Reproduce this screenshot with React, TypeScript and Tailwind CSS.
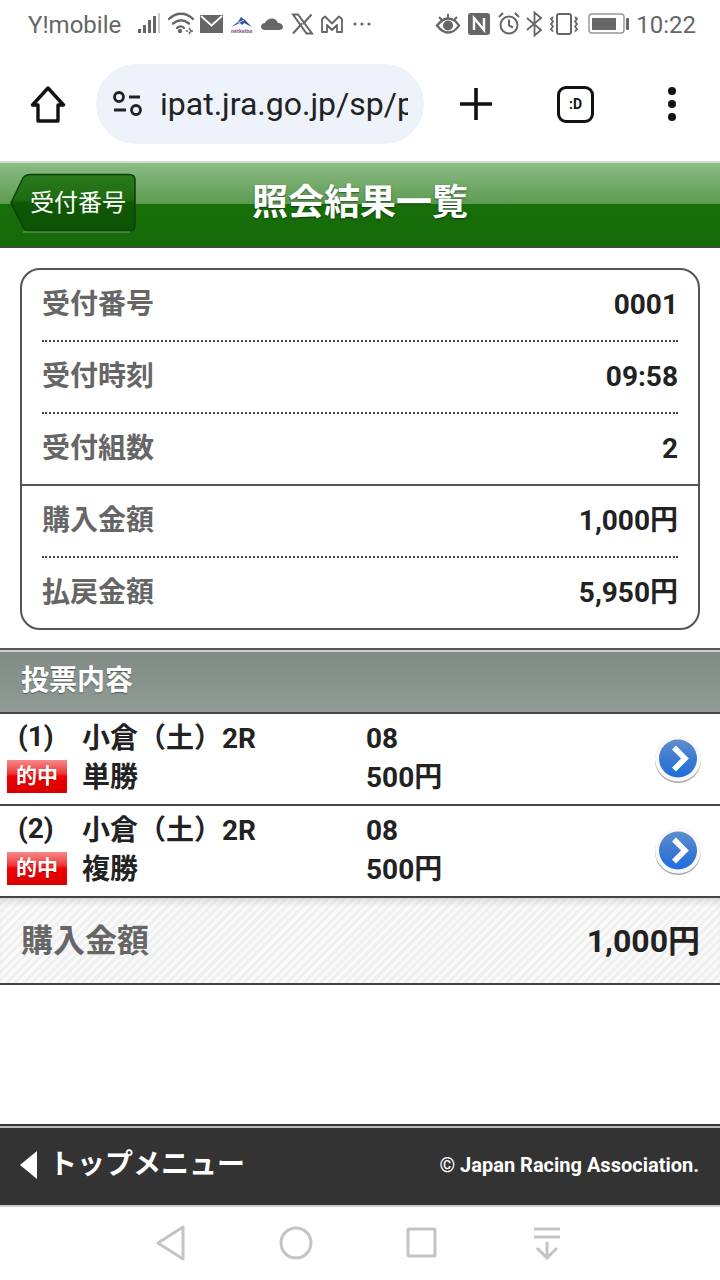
const jp = "font-['Roboto','Noto_Sans_CJK_JP',sans-serif]";

const StatusIcons = () => (
  <svg width="240" height="30" viewBox="0 0 240 30">
    {/* signal */}
    <g fill="#666">
      <rect x="0" y="19" width="3" height="4" />
      <rect x="5" y="15" width="3" height="8" />
      <rect x="10" y="10" width="3" height="13" />
      <rect x="15" y="6" width="3" height="17" />
      <rect x="20" y="3" width="2" height="20" fill="#ccc" />
    </g>
    {/* wifi */}
    <g fill="none" stroke="#666" strokeWidth="2.4" strokeLinecap="round">
      <path d="M31 9c7-7 17-7 24 0" />
      <path d="M35 13.500c5-4 11-4 16 0" />
      <path d="M39 18c2-2 5-2 7 0" />
    </g>
    <circle cx="42" cy="21" r="2.200" fill="#666" />
    <path d="M48 21h2m3 0h2M51 18l2 3-2 3" stroke="#666" strokeWidth="1.4" fill="none" />
    {/* mail */}
    <rect x="62" y="5" width="23" height="18" fill="#666" />
    <path d="M63 6l10.500 9.500L84 6" fill="none" stroke="#fff" strokeWidth="1.800" />
    {/* netkeiba */}
    <path d="M93 17l7-5 3-5 4 3 7 7-8-4-2 2-2-2z" fill="#2f4f9f" />
    <path d="M100 13l6-3" stroke="#fff" strokeWidth="0.800" />
    <text x="93" y="22.500" fontSize="5.500" fontWeight="700" fill="#7b5f8f" fontFamily="Roboto, sans-serif">netkeiba</text>
    {/* cloud */}
    <path d="M127 20c-3 0-4-2-4-3.500 0-2 2-3.500 4-3.500 1-3 4-4.500 7-4.500s5 2 6 4.500c3 0 5 2 5 4s-2 3-4 3z" fill="#666" />
    {/* X */}
    <path d="M155 4.500l13.500 19h5.500L160 4.500zM173.500 4.500l-8.500 9.500M155 23.500l9-10" fill="none" stroke="#666" strokeWidth="2" />
    {/* M mail */}
    <path d="M184 22V9l3-2.500 7 7 7-7 3 2.500v13h-5v-7l-5 5-5-5v7z" fill="none" stroke="#666" strokeWidth="1.800" strokeLinejoin="round" />
    {/* dots */}
    <g fill="#666">
      <circle cx="217" cy="14" r="1.600" />
      <circle cx="224" cy="14" r="1.600" />
      <circle cx="231" cy="14" r="1.600" />
    </g>
  </svg>
);

const StatusRight = () => (
  <svg width="196" height="30" viewBox="0 0 196 30">
    {/* eye */}
    <path d="M2 15.500c4-5 8-7 11-7s8 2 11 7c-3 5-8 7-11 7s-7-2-11-7z" fill="none" stroke="#666" strokeWidth="2.400" />
    <circle cx="13" cy="15.500" r="5" fill="#666" />
    <path d="M4 7l3 3M13 4v4M22 7l-3 3" stroke="#666" strokeWidth="2" />
    {/* nfc */}
    <rect x="33" y="3" width="22" height="22" rx="3" fill="#666" />
    <path d="M39 20V8l10 12V8" fill="none" stroke="#fff" strokeWidth="2.400" />
    {/* alarm */}
    <circle cx="74" cy="15" r="8.500" fill="none" stroke="#666" strokeWidth="2" />
    <path d="M74 9.500V15.500l4 2M64 7l4-4M84 7l-4-4" fill="none" stroke="#666" strokeWidth="2" />
    {/* bluetooth */}
    <path d="M92 8l14 12-6.500 5.500V2.500L106 8 92 20" fill="none" stroke="#666" strokeWidth="1.800" />
    {/* vibrate */}
    <rect x="122" y="4" width="14" height="20" rx="2" fill="none" stroke="#666" strokeWidth="2" />
    <path d="M118 7l-2 2 2 2.500-2 2.500 2 2.500-2 2.500 2 2.500M140 7l2 2-2 2.500 2 2.500-2 2.500 2 2.500-2 2.500" fill="none" stroke="#666" strokeWidth="1.800" />
    {/* battery */}
    <rect x="154" y="4" width="35" height="19" rx="3" fill="none" stroke="#999" strokeWidth="1.500" />
    <rect x="157" y="8" width="24" height="12" fill="#666" />
    <rect x="191" y="8" width="3" height="12" rx="1" fill="#666" />
  </svg>
);

const BackButton = () => (
  <div className="relative w-[128px] h-[60px] flex items-center justify-end pr-[10px]">
    <svg width="128" height="60" viewBox="0 0 128 60" className="absolute left-0 top-0">
      <defs>
        <linearGradient id="back" x1="0" y1="0" x2="0" y2="1">
          <stop offset="0" stopColor="#2a7a1c" />
          <stop offset="0.45" stopColor="#1f6a12" />
          <stop offset="0.5" stopColor="#0f5806" />
          <stop offset="1" stopColor="#0c5203" />
        </linearGradient>
      </defs>
      <path d="M3 30 L14 7 Q16 1.500 23 1.500 H121 Q127 1.500 127 7 V52 Q127 58 121 58 H23 Q16 58 14 52 Z" fill="url(#back)" stroke="#0e3f09" strokeWidth="1.500" />
      <path d="M15 59 H122" stroke="#6ea766" strokeWidth="1" />
    </svg>
    <span className={`relative text-white text-[24px] leading-none ${jp}`}>受付番号</span>
  </div>
);

const Row = ({ label, value, last }: { label: string; value: string; last?: boolean }) => (
  <div className={`h-[72px] mx-5 flex items-center justify-between border-b-2 ${last ? "border-transparent" : "border-dotted border-[#444]"}`}>
    <span className="text-[28px] font-bold text-[#666]">{label}</span>
    <span className="text-[28px] font-bold text-[#222]">{value}</span>
  </div>
);

const Badge = () => (
  <div className="w-[60px] h-[33px] flex items-center justify-center text-white text-[21px] font-bold leading-none [text-shadow:0_1px_1px_rgba(120,0,0,0.6)] bg-[linear-gradient(#f68a8a_0%,#ee3a3a_40%,#f00000_50%,#d80000_100%)]">
    的中
  </div>
);

const Chevron = () => (
  <svg width="48" height="48" viewBox="0 0 48 48">
    <defs>
      <linearGradient id="blue" x1="0" y1="0" x2="0" y2="1">
        <stop offset="0" stopColor="#5d8ed0" />
        <stop offset="0.5" stopColor="#3f7ad0" />
        <stop offset="1" stopColor="#1d6fe0" />
      </linearGradient>
    </defs>
    <circle cx="24" cy="25" r="23" fill="#a8a8a8" />
    <circle cx="24" cy="23.500" r="23" fill="#f8f8f8" />
    <circle cx="24" cy="23.500" r="19" fill="url(#blue)" />
    <path d="M20 12.500L31 23.500L20 34.500" fill="none" stroke="#fff" strokeWidth="5.500" />
  </svg>
);

const Bet = ({ no, type }: { no: string; type: string }) => (
  <div className="h-[92px] border-b-2 border-[#444] flex items-center text-[#222] font-bold text-[28px] leading-none">
    <div className="w-[82px] flex flex-col gap-[8px] pl-[7px] mb-[3px]">
      <span className="pl-[11px] h-[30px] flex items-center">{no}</span>
      <Badge />
    </div>
    <div className="w-[284px] flex flex-col gap-[11px] mb-[2px]">
      <span className="h-[28px] flex items-center">小倉（土）2R</span>
      <span className="h-[28px] flex items-center">{type}</span>
    </div>
    <div className="flex-1 flex flex-col gap-[11px] mb-[2px]">
      <span className="h-[28px] flex items-center">08</span>
      <span className="h-[28px] flex items-center">500円</span>
    </div>
    <div className="pr-[18px]">
      <Chevron />
    </div>
  </div>
);

export default function App() {
  return (
    <div className={`w-[720px] h-[1280px] flex flex-col bg-white overflow-hidden ${jp}`}>
      {/* status bar */}
      <div className="h-[60px] shrink-0 flex items-start justify-between pt-[10px] pl-[28px] pr-[24px] text-[#666] text-[24px] leading-[30px]">
        <div className="flex items-center gap-[17px]">
          <span>Y!mobile</span>
          <StatusIcons />
        </div>
        <div className="flex items-center gap-[5px]">
          <StatusRight />
          <span>10:22</span>
        </div>
      </div>

      {/* browser bar */}
      <div className="h-[101px] shrink-0 flex items-start">
        <div className="w-[96px] h-[80px] mt-[4px] flex items-center justify-center">
          <svg width="36" height="37" viewBox="0 0 36 37" fill="none" stroke="#111" strokeWidth="3.400" strokeLinejoin="round">
            <path d="M18 2L33.500 19H28V35H8V19H2.500Z" />
          </svg>
        </div>
        <div className="w-[328px] h-[80px] mt-[4px] rounded-full bg-[#edf2fb] flex items-center pl-[16px] pr-[16px]">
          <svg width="32" height="28" viewBox="0 0 32 28" fill="none" stroke="#222" strokeWidth="2.800" className="shrink-0">
            <circle cx="7" cy="7" r="4.500" />
            <path d="M17 7H28M2 20H14" />
            <circle cx="24" cy="20" r="4.500" />
          </svg>
          <div className="ml-[16px] overflow-hidden whitespace-nowrap text-[32px] text-[#222] flex-1">ipat.jra.go.jp/sp/p</div>
        </div>
        <div className="flex-1 h-[80px] mt-[4px] flex items-center">
          <svg width="34" height="34" viewBox="0 0 34 34" className="ml-[35px]" stroke="#111" strokeWidth="3.600">
            <path d="M17 1V33M1 17H33" />
          </svg>
          <div className="ml-[64px] w-[37px] h-[37px] rounded-[9px] border-[3.500px] border-[#111] flex items-center justify-center text-[14px] font-bold text-[#111] leading-none">
            :D
          </div>
          <div className="ml-[74px] flex flex-col gap-[5px]">
            <span className="w-[8px] h-[8px] rounded-full bg-[#111]" />
            <span className="w-[8px] h-[8px] rounded-full bg-[#111]" />
            <span className="w-[8px] h-[8px] rounded-full bg-[#111]" />
          </div>
        </div>
      </div>

      {/* page header */}
      <div className="h-[87px] shrink-0 relative flex items-center justify-center pb-[4px] border-t-2 border-t-[#cfe0cb] border-b-2 border-b-[#3f4a3c] bg-[linear-gradient(#8dbc85_0%,#5b9a50_50%,#176f0a_50%,#146a07_100%)]">
        <div className="absolute left-[8px] top-[10px]">
          <BackButton />
        </div>
        <h1 className="text-white text-[36px] font-bold leading-none [text-shadow:0_1px_2px_rgba(0,0,0,0.5)]">照会結果一覧</h1>
      </div>

      {/* summary card */}
      <div className="mx-5 mt-5 h-[362px] shrink-0 border-2 border-[#555] rounded-[20px]">
        <Row label="受付番号" value="0001" />
        <Row label="受付時刻" value="09:58" />
        <div className="h-[72px] border-b-2 border-[#555]">
          <Row label="受付組数" value="2" last />
        </div>
        <Row label="購入金額" value="1,000円" />
        <Row label="払戻金額" value="5,950円" last />
      </div>

      {/* bets */}
      <div className="mt-[18px] h-[66px] shrink-0 flex items-center pl-[21px] border-t-2 border-t-[#555] border-b-2 border-b-[#444] bg-[linear-gradient(#7f8a85,#929c96)] shadow-[inset_0_2px_0_#ccc]">
        <span className="text-white text-[28px] font-bold leading-none [text-shadow:0_1px_1px_rgba(0,0,0,0.4)]">投票内容</span>
      </div>
      <Bet no="(1)" type="単勝" />
      <Bet no="(2)" type="複勝" />

      {/* total */}
      <div className="h-[87px] shrink-0 flex items-center justify-between pl-[21px] pr-[20px] border-b-2 border-[#444] shadow-[inset_0_8px_8px_-6px_#d0d0d0] bg-[repeating-linear-gradient(135deg,#fafafa_0px,#fafafa_3px,#f0f0f0_3px,#f0f0f0_6px)]">
        <span className="text-[32px] font-bold text-[#666] leading-none">購入金額</span>
        <span className="text-[32px] font-bold text-[#222] leading-none">1,000円</span>
      </div>

      <div className="flex-1" />

      {/* footer */}
      <div className="h-[83px] shrink-0 flex items-center justify-between pb-[2px] pl-[20px] pr-[21px] bg-[#333] border-t-2 border-t-[#333] shadow-[inset_0_2px_0_#bbb] border-b-2 border-b-[#ccc]">
        <div className="flex items-center gap-[12px]">
          <svg width="17" height="28" viewBox="0 0 17 28">
            <path d="M0 14L17 0V28Z" fill="#fff" />
          </svg>
          <span className="text-white text-[28px] font-bold leading-none">トップメニュー</span>
        </div>
        <span className="text-white text-[20px] font-bold leading-none">© Japan Racing Association.</span>
      </div>

      {/* nav bar */}
      <div className="h-[73px] shrink-0 flex items-center pb-[2px]">
        <svg width="30" height="36" viewBox="0 0 30 36" fill="none" stroke="#c4c4c4" strokeWidth="3" strokeLinejoin="round" className="ml-[156px]">
          <path d="M27 2V34L2 18Z" />
        </svg>
        <svg width="34" height="34" viewBox="0 0 34 34" fill="none" stroke="#c4c4c4" strokeWidth="3" className="ml-[93px]">
          <circle cx="17" cy="17" r="15" />
        </svg>
        <svg width="32" height="32" viewBox="0 0 32 32" fill="none" stroke="#c4c4c4" strokeWidth="3" className="ml-[93px]">
          <rect x="2" y="2" width="27" height="27" rx="1" />
        </svg>
        <svg width="28" height="34" viewBox="0 0 28 34" fill="none" stroke="#c4c4c4" strokeWidth="3" className="ml-[95px]">
          <path d="M1 3H27M1 11H27M14 16V32M4 22L14 32L24 22" />
        </svg>
      </div>
    </div>
  );
}
